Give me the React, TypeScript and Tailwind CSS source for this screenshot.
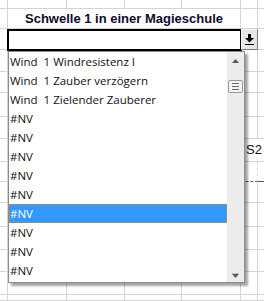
const ROWS = [
  'h-[9px]', 'h-[20px]', 'h-[21px]', 'h-[22px]', 'h-[21px]', 'h-[24px]', 'h-[22px]', 'h-[23px]',
  'h-[20px]', 'h-[21px]', 'h-[24px]', 'h-[23px]', 'h-[22px]', 'h-[23px]', 'h-[6px]',
];
const COLS = ['w-[8px]', 'w-[59px]', 'w-[58px]', 'w-[57px]', 'w-[59px]', 'w-[17px]'];

const ITEMS = [
  'Wind  1 Windresistenz I',
  'Wind  1 Zauber verzögern',
  'Wind  1 Zielender Zauberer',
  '#NV', '#NV', '#NV', '#NV', '#NV', '#NV', '#NV', '#NV', '#NV',
];
const SELECTED = 8;

function GridRow({ idx }: { idx: number }) {
  const h = ROWS[idx];
  // title + input rows are merged across B:E
  if (idx === 1 || idx === 2) {
    return (
      <div className={`flex ${h}`}>
        <div className="w-[8px] border-r border-b border-[#d4d4d4]" />
        <div className="w-[233px] border-r border-b border-[#d4d4d4] flex items-center justify-center">
          {idx === 1 && (
            <span className="font-['Liberation_Sans',Arial,sans-serif] font-bold text-[13px] text-[#0c0c30] whitespace-nowrap">
              Schwelle 1 in einer Magieschule
            </span>
          )}
        </div>
        <div className="w-[17px] border-r border-b border-[#d4d4d4]" />
        <div className="flex-1 border-b border-[#d4d4d4]" />
      </div>
    );
  }
  return (
    <div className={`flex ${h}`}>
      {COLS.map((w, i) => {
        if (i === 5 && idx === 7) {
          return (
            <div key={i} className={`${w} border-b border-[#d4d4d4] flex items-center`}>
              <span className="pl-[5px] font-['Liberation_Sans',Arial,sans-serif] text-[13px] text-[#101020] whitespace-nowrap">S2</span>
            </div>
          );
        }
        const dashed = idx === 8 && i === 5;
        return (
          <div
            key={i}
            className={`${w} border-r ${dashed ? 'border-b border-b-[#555] border-dashed border-r-[#d4d4d4]' : 'border-b border-[#d4d4d4]'}`}
          />
        );
      })}
      <div className={`flex-1 ${idx === 8 ? 'border-b border-dashed border-[#555]' : 'border-b border-[#d4d4d4]'}`} />
    </div>
  );
}

function ScrollBar() {
  return (
    <div className="w-[17px] bg-[#ededed] flex flex-col">
      <div className="h-[17px] flex items-center justify-center">
        <svg width="7" height="4" viewBox="0 0 7 4"><path d="M3.5 0 L7 4 L0 4 Z" fill="#5a5a5a" /></svg>
      </div>
      <div className="mt-[11px] mx-[1px] h-[13px] rounded-[2px] border border-[#9a9a9a] bg-[#f4f4f4] flex flex-col items-center justify-center gap-[2px]">
        <div className="w-[7px] h-px bg-[#6a6a6a]" />
        <div className="w-[7px] h-px bg-[#6a6a6a]" />
        <div className="w-[7px] h-px bg-[#6a6a6a]" />
      </div>
      <div className="flex-1" />
      <div className="h-[17px] flex items-center justify-center pt-[3px]">
        <svg width="7" height="5" viewBox="0 0 7 5">
          <path d="M0 0 H7" stroke="#8a8a8a" strokeWidth="1" />
          <path d="M0 1 L7 1 L3.5 5 Z" fill="#5a5a5a" />
        </svg>
      </div>
    </div>
  );
}

export default function App() {
  return (
    <div className="relative w-[264px] h-[301px] overflow-hidden bg-white">
      {/* sheet grid */}
      <div className="flex flex-col">
        {ROWS.map((_, i) => <GridRow key={i} idx={i} />)}
      </div>

      {/* selected cell frame */}
      <div className="absolute left-[7px] top-[29px] w-[235px] h-[22px] border-2 border-black" />

      {/* dropdown button */}
      <div className="absolute left-[241px] top-[29px] w-[17px] h-[21px] bg-[#e6e6e6] border border-[#7a7a7a] border-t-[#f4f4f4] border-l-[#f4f4f4] flex items-center justify-center">
        <svg width="9" height="11" viewBox="0 0 9 11">
          <rect x="3" y="0" width="3" height="4" fill="#000" />
          <path d="M0 4 H9 L4.5 8.5 Z" fill="#000" />
          <rect x="0" y="10" width="9" height="1" fill="#000" />
        </svg>
      </div>

      {/* validation list */}
      <div className="absolute left-[8px] top-[51px] w-[237px] h-[232px] bg-white border border-[#8c8c8c] shadow-[3px_3px_2px_rgba(0,0,0,0.35)] flex">
        <div className="flex-1 flex flex-col">
          {ITEMS.map((t, i) => (
            <div
              key={i}
              className={`h-[19px] flex items-center border whitespace-pre font-['Open_Sans',sans-serif] text-[11.5px] ${
                i === SELECTED
                  ? 'bg-[#3399ff] text-white border-dotted border-[#e8801a]'
                  : 'border-transparent text-[#111]'
              }`}
            >
              {t}
            </div>
          ))}
        </div>
        <ScrollBar />
      </div>
    </div>
  );
}
